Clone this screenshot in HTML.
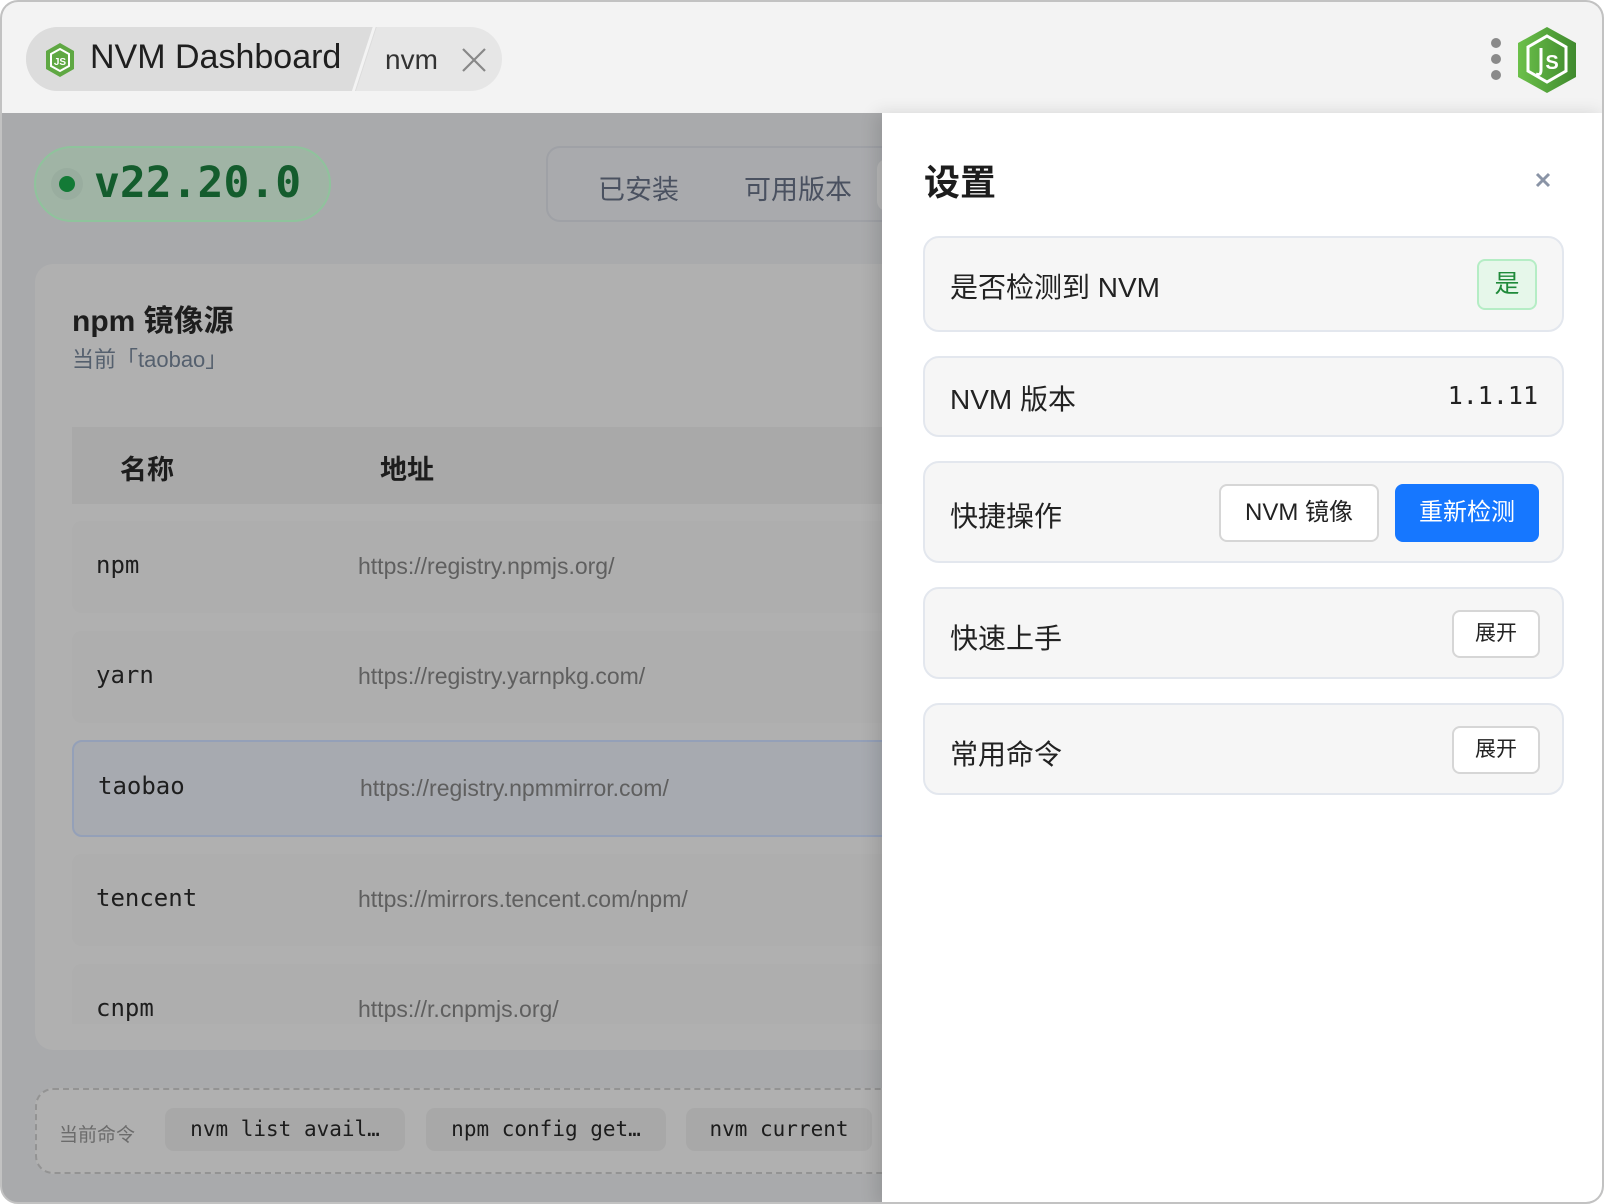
<!DOCTYPE html>
<html><head><meta charset="utf-8"><style>
*{margin:0;padding:0;box-sizing:border-box}
body{width:1604px;height:1204px;background:#fff;font-family:"Liberation Sans","Noto Sans CJK SC",sans-serif;overflow:hidden;position:relative}
.win{position:absolute;left:0;top:0;width:1604px;height:1204px;border:2px solid #c2c2c2;border-radius:18px;overflow:hidden;background:#a9aaac}
.title{position:absolute;left:0;top:0;width:1600px;height:111px;background:#f3f3f3}
.abs{position:absolute}
.row{position:absolute;left:68px;width:900px;background:#aeaeae;border-radius:10px}
.row .n{position:absolute;left:24px;font-family:"DejaVu Sans Mono",monospace;font-size:24px;color:#1e1e1e}
.row .u{position:absolute;left:286px;font-size:23px;color:#5f5f5f}
.chip{position:absolute;top:1106px;height:43px;background:#a8a8a8;border-radius:9px;font-family:"DejaVu Sans Mono",monospace;font-size:21px;color:#1c1c1c;text-align:center;line-height:43px}
.item{position:absolute;left:921px;width:641px;background:#f6f6f6;border:2px solid #e3e7ee;border-radius:16px}
.item .l{position:absolute;left:25px;font-size:28px;color:#222}
.btn{position:absolute;border:2px solid #d6d6d6;border-radius:8px;background:#fff;text-align:center;color:#222}
</style></head><body>
<div class="win">
 <div class="title">
  <div class="abs" style="left:24px;top:25px;width:476px;height:64px;border-radius:32px;background:#e6e6e6;overflow:hidden">
   <div class="abs" style="left:0;top:0;width:330px;height:64px;background:#dcdcdc"></div>
   <div class="abs" style="left:318px;top:-4px;width:22px;height:74px;background:#dcdcdc;transform:skewX(-18deg)"></div>
   <div class="abs" style="left:336px;top:-4px;width:3px;height:74px;background:#f3f3f3;transform:skewX(-18deg)"></div>
  </div>
  <svg class="abs" style="left:42px;top:40px" width="32" height="36" viewBox="0 0 32 36"><polygon points="16,1 30,9 30,27 16,35 2,27 2,9" fill="#5fa843"/><polygon points="16,7 25,12 25,24 16,29 7,24 7,12" fill="none" stroke="#fff" stroke-width="2"/><text x="16" y="23" text-anchor="middle" font-size="10" font-weight="bold" fill="#fff" font-family="Liberation Sans">JS</text></svg>
  <div class="abs" style="left:88px;top:36px;font-size:34px;color:#1f1f1f">NVM Dashboard</div>
  <div class="abs" style="left:383px;top:42px;font-size:28px;color:#333">nvm</div>
  <svg class="abs" style="left:458px;top:44px" width="28" height="28"><path d="M3 3L25 25M25 3L3 25" stroke="#888" stroke-width="2.2"/></svg>
  <div class="abs" style="left:1489px;top:36px;width:10px;height:10px;border-radius:5px;background:#8a8a8a"></div>
  <div class="abs" style="left:1489px;top:52px;width:10px;height:10px;border-radius:5px;background:#8a8a8a"></div>
  <div class="abs" style="left:1489px;top:68px;width:10px;height:10px;border-radius:5px;background:#8a8a8a"></div>
  <svg class="abs" style="left:1514px;top:24px" width="62" height="68" viewBox="0 0 62 68"><defs><linearGradient id="g" x1="0" x2="1"><stop offset="0" stop-color="#6cc04a"/><stop offset="1" stop-color="#3f8a2e"/></linearGradient></defs><polygon points="31,1 60,17 60,51 31,67 2,51 2,17" fill="url(#g)"/><polygon points="31,10 50,21 50,45 31,56 12,45 12,21" fill="none" stroke="#fff" stroke-width="3"/><path d="M25 22V44Q25 50 20 48" fill="none" stroke="#fff" stroke-width="3"/><text x="36" y="43" text-anchor="middle" font-size="20" font-weight="bold" fill="#fff" font-family="Liberation Sans">S</text></svg>
 </div>
 <div class="abs" style="left:32px;top:144px;width:297px;height:76px;border-radius:38px;background:#a0b4a5;border:2px solid #8fc39c"></div>
 <div class="abs" style="left:57px;top:174px;width:16px;height:16px;border-radius:8px;background:#137a36;box-shadow:0 0 0 8px #99ad9f"></div>
 <div class="abs" style="left:92px;top:156px;font-family:'DejaVu Sans Mono',monospace;font-weight:bold;font-size:43px;color:#145c2d">v22.20.0</div>
 <div class="abs" style="left:544px;top:144px;width:360px;height:76px;border-radius:14px;border:2px solid #9fa1a6;background:#a9aaad"></div>
 <div class="abs" style="left:875px;top:157px;width:40px;height:52px;border-radius:10px;background:#b8b8b8"></div>
 <div class="abs" style="left:596px;top:166px;font-size:27px;color:#4a5160">已安装</div>
 <div class="abs" style="left:742px;top:166px;font-size:27px;color:#4a5160">可用版本</div>
 <div class="abs" style="left:33px;top:262px;width:900px;height:786px;border-radius:18px;background:#b0b0b0;overflow:hidden">
  <div class="abs" style="left:37px;top:32px;font-size:30px;font-weight:bold;color:#1d1d1d">npm 镜像源</div>
  <div class="abs" style="left:37px;top:78px;font-size:22px;color:#55606e">当前「taobao」</div>
  <div class="abs" style="left:37px;top:163px;width:900px;height:77px;background:#a9a9a9"></div>
  <div class="abs" style="left:85px;top:184px;font-size:27px;font-weight:bold;color:#1d1d1d">名称</div>
  <div class="abs" style="left:345px;top:184px;font-size:27px;font-weight:bold;color:#1d1d1d">地址</div>
 </div>
 <div class="abs" style="left:33px;top:262px;width:900px;height:760px;overflow:hidden">
  <div class="row" style="left:37px;top:257px;height:92px"><div class="n" style="top:30px">npm</div><div class="u" style="top:32px">https://registry.npmjs.org/</div></div>
  <div class="row" style="left:37px;top:367px;height:92px"><div class="n" style="top:30px">yarn</div><div class="u" style="top:32px">https://registry.yarnpkg.com/</div></div>
  <div class="row" style="left:37px;top:476px;height:97px;background:#a7aab0;border:2px solid #94a0b8"><div class="n" style="top:30px">taobao</div><div class="u" style="top:33px">https://registry.npmmirror.com/</div></div>
  <div class="row" style="left:37px;top:590px;height:92px"><div class="n" style="top:30px">tencent</div><div class="u" style="top:32px">https://mirrors.tencent.com/npm/</div></div>
  <div class="row" style="left:37px;top:700px;height:92px"><div class="n" style="top:30px">cnpm</div><div class="u" style="top:32px">https://r.cnpmjs.org/</div></div>
 </div>
 <div class="abs" style="left:33px;top:1086px;width:900px;height:86px;border:2px dashed #939393;border-radius:18px;background:#b0b0b0"></div>
 <div class="abs" style="left:57px;top:1118px;font-size:19px;color:#6b6b6b">当前命令</div>
 <div class="chip" style="left:163px;width:240px">nvm list avail…</div>
 <div class="chip" style="left:424px;width:240px">npm config get…</div>
 <div class="chip" style="left:684px;width:186px">nvm current</div>
 <div class="abs" style="left:880px;top:111px;width:724px;height:1093px;background:#fff;box-shadow:-6px 0 16px rgba(0,0,0,.12)"></div>
 <div class="abs" style="left:922px;top:152px;font-size:36px;font-weight:bold;color:#1d1d1d">设置</div>
 <svg class="abs" style="left:1533px;top:170px" width="16" height="16"><path d="M2 2L14 14M14 2L2 14" stroke="#8a94a6" stroke-width="3"/></svg>
 <div class="item" style="top:234px;height:96px"><div class="l" style="top:28px">是否检测到 NVM</div>
  <div class="btn" style="left:552px;top:21px;width:60px;height:51px;background:#e6f7ea;border-color:#b5edc5;color:#1f8a3a;font-size:25px;line-height:47px">是</div></div>
 <div class="item" style="top:354px;height:81px"><div class="l" style="top:20px">NVM 版本</div>
  <div class="abs" style="right:24px;top:23px;font-family:'DejaVu Sans Mono',monospace;font-size:25px;color:#222">1.1.11</div></div>
 <div class="item" style="top:459px;height:102px"><div class="l" style="top:32px">快捷操作</div>
  <div class="btn" style="left:294px;top:21px;width:160px;height:58px;font-size:24px;line-height:54px">NVM 镜像</div>
  <div class="btn" style="left:470px;top:21px;width:144px;height:58px;font-size:24px;line-height:54px;background:#1677ff;border-color:#1677ff;color:#fff">重新检测</div></div>
 <div class="item" style="top:585px;height:92px"><div class="l" style="top:28px">快速上手</div>
  <div class="btn" style="left:527px;top:21px;width:88px;height:48px;font-size:21px;line-height:44px">展开</div></div>
 <div class="item" style="top:701px;height:92px"><div class="l" style="top:28px">常用命令</div>
  <div class="btn" style="left:527px;top:21px;width:88px;height:48px;font-size:21px;line-height:44px">展开</div></div>
</div>
</body></html>
